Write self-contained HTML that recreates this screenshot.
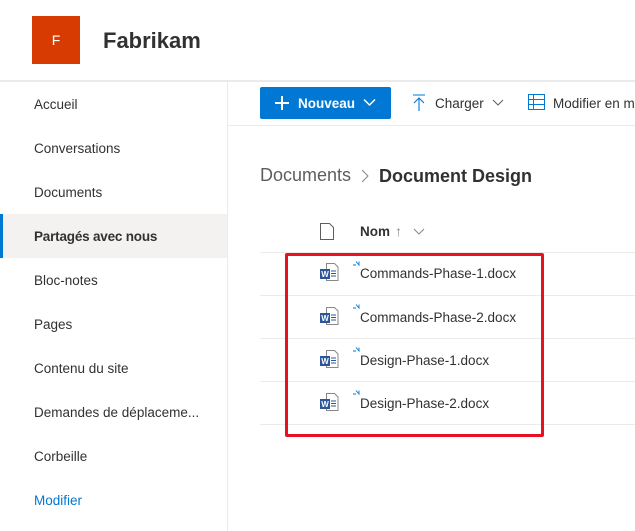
<!DOCTYPE html>
<html><head><meta charset="utf-8"><style>
*{margin:0;padding:0;box-sizing:border-box}
body{width:635px;height:531px;overflow:hidden;background:#fff;font-family:"Liberation Sans",Arial,sans-serif;color:#323130;position:relative}
.abs{position:absolute;white-space:nowrap}
.nav{font-size:13.5px;left:34px;color:#323130}
.row{position:absolute;left:260px;width:375px;height:1px;background:#edebe9}
.fn{font-size:13.5px;left:360px;color:#323130}
</style></head><body>
<div class="abs" style="left:32px;top:16px;width:48px;height:48px;background:#d83b01;color:#fff;font-size:14px;line-height:48px;text-align:center">F</div>
<div class="abs" style="left:103px;top:28px;font-size:22px;font-weight:bold;color:#323130">Fabrikam</div>
<div class="abs" style="left:0;top:80px;width:635px;height:2px;background:#eaeaea"></div>
<div class="abs" style="left:227px;top:82px;width:1px;height:449px;background:#edebe9"></div>
<div class="abs" style="left:0;top:214px;width:227px;height:44px;background:#f3f2f1"></div>
<div class="abs" style="left:0;top:214px;width:3px;height:44px;background:#0078d4"></div>
<div class="abs nav" style="top:97px">Accueil</div>
<div class="abs nav" style="top:141px">Conversations</div>
<div class="abs nav" style="top:185px">Documents</div>
<div class="abs nav" style="top:229px;font-weight:bold;letter-spacing:-0.2px">Partagés avec nous</div>
<div class="abs nav" style="top:273px">Bloc-notes</div>
<div class="abs nav" style="top:317px">Pages</div>
<div class="abs nav" style="top:361px">Contenu du site</div>
<div class="abs nav" style="top:405px">Demandes de déplaceme...</div>
<div class="abs nav" style="top:449px">Corbeille</div>
<div class="abs nav" style="top:493px;color:#0078d4">Modifier</div>
<div class="abs" style="left:228px;top:125px;width:407px;height:1px;background:#edebe9"></div>
<div class="abs" style="left:260px;top:87px;width:131px;height:32px;background:#0078d4;border-radius:2px"></div>
<svg class="abs" style="left:274px;top:95px" width="16" height="16"><path d="M8 1v14M1 8h14" stroke="#fff" stroke-width="2"/></svg>
<div class="abs" style="left:298px;top:96px;color:#fff;font-weight:bold;font-size:13.5px">Nouveau</div>
<svg class="abs" style="left:363px;top:98px" width="13" height="9"><path d="M1 1.5l5.5 5.5 5.5-5.5" stroke="#fff" stroke-width="1.5" fill="none"/></svg>
<svg class="abs" style="left:412px;top:94px" width="14" height="18"><path d="M1 1h12M7 4v13M2 9l5-5 5 5" stroke="#0078d4" stroke-width="1.1" fill="none"/></svg>
<div class="abs" style="left:435px;top:96px;font-size:13.5px">Charger</div>
<svg class="abs" style="left:492px;top:99px" width="12" height="8"><path d="M1 1l5 5 5-5" stroke="#605e5c" stroke-width="1" fill="none"/></svg>
<svg class="abs" style="left:528px;top:94px" width="17" height="16"><path d="M.5 .5h16v15H.5zM.5 5.5h16M.5 10.5h16M5.5.5v15" stroke="#0078d4" stroke-width="1" fill="none"/></svg>
<div class="abs" style="left:553px;top:96px;font-size:13.5px">Modifier en mode</div>
<div class="abs" style="left:260px;top:165px;font-size:18px;color:#605e5c">Documents</div>
<svg class="abs" style="left:361px;top:169px" width="8" height="14"><path d="M1 1l6 6-6 6" stroke="#8a8886" stroke-width="1" fill="none"/></svg>
<div class="abs" style="left:379px;top:166px;font-size:18px;font-weight:bold;color:#323130">Document Design</div>
<svg class="abs" style="left:320px;top:223px" width="14" height="17"><path d="M.5 .5h9l4 4v12H.5z" stroke="#605e5c" fill="none"/></svg>
<div class="abs" style="left:360px;top:224px;font-size:13.5px;font-weight:bold">Nom</div>
<div class="abs" style="left:395px;top:223px;font-size:14px;color:#8a8886">↑</div>
<svg class="abs" style="left:413px;top:228px" width="12" height="8"><path d="M1 1l5 5 5-5" stroke="#8a8886" stroke-width="1" fill="none"/></svg>
<div class="row" style="top:252px"></div>
<div class="row" style="top:295px"></div>
<div class="row" style="top:338px"></div>
<div class="row" style="top:381px"></div>
<div class="row" style="top:424px"></div>
<svg width="0" height="0" style="position:absolute"><defs><g id="w"><path d="M6.5 .5h8l3.5 3.5v13.5h-11.5z" fill="#fff" stroke="#8a8886"/><path d="M11 8h5M11 10.5h5M11 13h5" stroke="#2b579a"/><rect x="0" y="6" width="10" height="10" fill="#2b579a"/><text x="1.3" y="14" font-size="8" fill="#fff" font-family="Liberation Sans" font-weight="bold">W</text></g><g id="s"><path d="M0 4h3M3 0.5l3 3.5v-3.5" stroke="#0078d4" stroke-width="0.9" fill="none"/></g></defs></svg>
<svg class="abs" style="left:320px;top:263px" width="19" height="19"><use href="#w"/></svg>
<svg class="abs" style="left:320px;top:307px" width="19" height="19"><use href="#w"/></svg>
<svg class="abs" style="left:320px;top:350px" width="19" height="19"><use href="#w"/></svg>
<svg class="abs" style="left:320px;top:393px" width="19" height="19"><use href="#w"/></svg>
<svg class="abs" style="left:353px;top:261px" width="7" height="6"><use href="#s"/></svg>
<svg class="abs" style="left:353px;top:304px" width="7" height="6"><use href="#s"/></svg>
<svg class="abs" style="left:353px;top:347px" width="7" height="6"><use href="#s"/></svg>
<svg class="abs" style="left:353px;top:390px" width="7" height="6"><use href="#s"/></svg>
<div class="abs fn" style="top:266px">Commands-Phase-1.docx</div>
<div class="abs fn" style="top:310px">Commands-Phase-2.docx</div>
<div class="abs fn" style="top:353px">Design-Phase-1.docx</div>
<div class="abs fn" style="top:396px">Design-Phase-2.docx</div>
<div class="abs" style="left:285px;top:253px;width:259px;height:184px;border:3px solid #e81123;border-radius:2px"></div>
</body></html>
